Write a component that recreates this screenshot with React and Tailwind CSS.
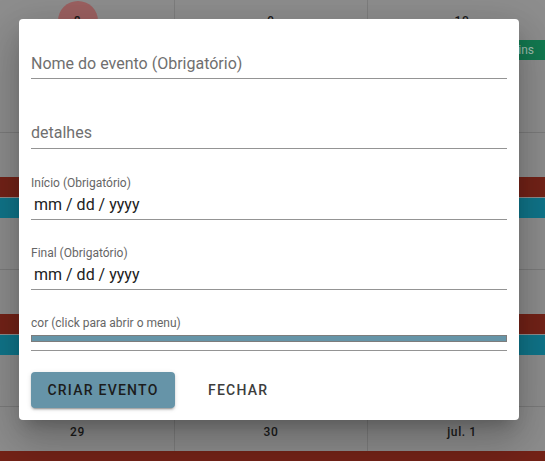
const WEEKS = [
  { days: ["8", "9", "10"], today: 0, events: [{ color: "bg-[#137a51]", col: "col-start-3 col-end-4", text: "Reunião 30 mins" }] },
  { days: ["15", "16", "17"], events: [{ color: "bg-[#742318]" }, { color: "bg-[#10768b]" }] },
  { days: ["22", "23", "24"], events: [{ color: "bg-[#742318]" }, { color: "bg-[#10768b]" }] },
  { days: ["29", "30", "jul. 1"], events: [{ color: "bg-[#742318]" }, { color: "bg-[#10768b]" }] },
];

const EVENT_ROWS = ["row-start-2", "row-start-4"];
const DAY_COLS = ["col-start-1", "col-start-2", "col-start-3"];

function WeekRow({ week, first }) {
  return (
    <div
      className={`grid grid-cols-[194px_193px_1fr] grid-rows-[44px_20px_1px_20px_1fr] h-[137px] ${
        first ? "border-t border-transparent" : "border-t border-[#7c7c7c]"
      }`}
    >
      {week.days.map((d, i) => (
        <div
          key={d}
          className={`${DAY_COLS[i]} row-start-1 row-end-6 flex justify-center ${i < 2 ? "border-r border-[#7e7e7e]" : ""}`}
        >
          <div
            className={`mt-[5px] w-10 h-10 rounded-full flex items-center justify-center text-[12px] font-medium tracking-[0.6px] text-[#1b1b1b] ${
              week.today === i ? "bg-[#9c6161]" : ""
            }`}
          >
            {d}
          </div>
        </div>
      ))}
      {week.events.map((ev, i) => (
        <div
          key={i}
          className={`${EVENT_ROWS[i]} ${ev.col || "col-start-1 col-end-4"} ${ev.color} flex items-center justify-end pr-[22px] text-[12px] text-[#a0bfb1] overflow-hidden whitespace-nowrap`}
        >
          {ev.text}
        </div>
      ))}
    </div>
  );
}

function Field({ label, value, placeholder }) {
  return (
    <div className="border-b border-[#949494]">
      {label && <div className="h-4 text-[12px] leading-4 text-[#666666]">{label}</div>}
      {value ? (
        <div className="mt-[4px] h-5 pl-[3px] pb-[4px] box-content text-[16px] leading-5 text-[#212121]">{value}</div>
      ) : (
        <div className="h-5 pb-[4px] box-content text-[16px] leading-5 text-[#6f6f6f]">{placeholder}</div>
      )}
    </div>
  );
}

export default function App() {
  return (
    <div className="relative w-[545px] h-[461px] overflow-hidden bg-[#8e8e8e] font-['Roboto',sans-serif]">
      {/* dimmed calendar behind the dialog */}
      <div className="-mt-[5px] -ml-[19px] w-[575px]">
        {WEEKS.map((w, i) => (
          <WeekRow key={i} week={w} first={i === 0} />
        ))}
      </div>

      {/* dialog */}
      <div className="absolute top-[19px] left-[19px] w-[500px] h-[401px] bg-white rounded-[4px] px-3 pt-[35px] shadow-[0_11px_15px_-7px_rgba(0,0,0,0.2),0_24px_38px_3px_rgba(0,0,0,0.14),0_9px_46px_8px_rgba(0,0,0,0.12)]">
        <Field placeholder="Nome do evento (Obrigatório)" />
        <div className="mt-[44px] border-b border-[#949494]">
          <div className="h-5 pb-[5px] box-content text-[16px] leading-5 text-[#6f6f6f]">detalhes</div>
        </div>
        <div className="mt-[26px]">
          <Field label="Início (Obrigatório)" value="mm / dd / yyyy" />
        </div>
        <div className="mt-[25px]">
          <Field label="Final (Obrigatório)" value="mm / dd / yyyy" />
        </div>
        <div className="mt-[25px] border-b border-[#949494] pb-[8px]">
          <div className="h-4 text-[12px] leading-4 text-[#666666]">cor (click para abrir o menu)</div>
          <div className="mt-[4px] h-[7px] bg-[#6695a8] border border-[#7d7d7d]" />
        </div>
        <div className="mt-[21px] flex items-center gap-[17px]">
          <button className="h-9 w-[144px] rounded-[4px] bg-[#6694a8] text-[14px] font-medium tracking-[1.25px] text-[#1c1c1c] shadow-[0_3px_1px_-2px_rgba(0,0,0,0.2),0_2px_2px_0_rgba(0,0,0,0.14),0_1px_5px_0_rgba(0,0,0,0.12)]">
            CRIAR EVENTO
          </button>
          <button className="h-9 px-4 rounded-[4px] text-[14px] font-medium tracking-[1.25px] text-[#3d3d3d]">
            FECHAR
          </button>
        </div>
      </div>
    </div>
  );
}
